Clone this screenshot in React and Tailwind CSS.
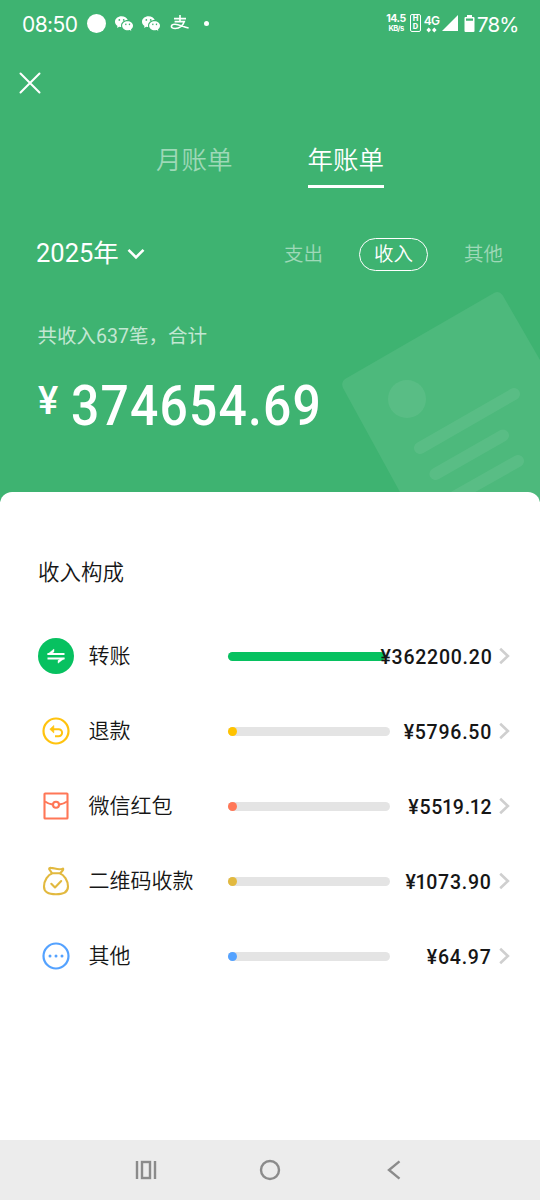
import React from "react";
import { BsWechat } from "react-icons/bs";

const CJK = "font-['Noto_Sans_CJK_SC',sans-serif] font-[350]";
const MIX = "font-['Roboto','Noto_Sans_CJK_SC',sans-serif]";

function AlipayGlyph() {
  return (
    <svg width="20" height="18" viewBox="0 0 20 18" fill="none" stroke="white" strokeWidth="1.6" className="ml-[10px]">
      <path d="M4 4.600h12M10 1v6.600M4.600 7.600h9.700C12.800 12 9 14.500 5.200 14.500C2.700 14.500 1.400 13.500 1.400 12.400C1.400 11.200 2.800 10.300 5 10.300C9 10.300 12.500 12.600 18.600 14" />
    </svg>
  );
}

function StatusBar() {
  return (
    <div className="flex h-[46px] items-center text-white font-['Inter',sans-serif]">
      <span className="ml-[22px] w-[56px] whitespace-nowrap text-[21px] leading-[26px] tracking-[-0.6px] mt-[3px]">08:50</span>
      <span className="ml-[9px] size-[19px] rounded-full bg-white" />
      <BsWechat className="ml-[9px] size-[18px]" />
      <BsWechat className="ml-[9px] size-[18px]" />
      <AlipayGlyph />
      <span className="ml-[14px] size-[5px] rounded-full bg-white" />
      <div className="ml-auto flex items-center">
        <div className="flex w-[20px] flex-col items-center font-bold whitespace-nowrap">
          <span className="text-[10.500px] leading-[11px] tracking-[-0.5px]">14.5</span>
          <span className="text-[7.500px] leading-[9px] tracking-[-0.6px]">KB/s</span>
        </div>
        <div className="ml-[4px] flex h-[18px] w-[11px] flex-col items-center justify-center rounded-[2px] border-[1.5px] border-white text-[7.500px] leading-[8px] font-extrabold">
          <span>H</span>
          <span>D</span>
        </div>
        <div className="ml-[3px] flex w-[15px] flex-col items-center pt-[1px]">
          <span className="text-[12px] font-semibold leading-[12px] tracking-[-0.7px]">4G</span>
          <svg width="11" height="6" viewBox="0 0 11 6" fill="white">
            <path d="M2.700.4L5 2.900L2.700 5.400L.4 2.900ZM8.300.4l2.300 2.500l-2.300 2.500L6 2.900Z" />
          </svg>
        </div>
        <svg width="16" height="16" viewBox="0 0 16 16" fill="white" className="ml-[3px]">
          <path d="M16 0v16H0Z" />
        </svg>
        <svg width="11" height="18" viewBox="0 0 11 18" className="ml-[6px] mt-[1px]">
          <path fill="white" fillRule="evenodd" d="M3 0h5v2h1.500a1 1 0 0 1 1 1v13a1 1 0 0 1-1 1h-8a1 1 0 0 1-1-1V3a1 1 0 0 1 1-1H3ZM2 3.600v2.200h7V3.600Z" />
        </svg>
        <span className="ml-[2px] mr-[22px] w-[41px] whitespace-nowrap text-[20.500px] leading-[26px] tracking-[-0.9px] mt-[3px]">78%</span>
      </div>
    </div>
  );
}

function ReceiptArt() {
  return (
    <svg className="absolute right-0 bottom-0" width="220" height="222" viewBox="320 280 220 222">
      <path
        fill="white"
        fillOpacity=".08"
        d="M345 379L494 293Q499 290 502.500 295L600 464L470 620L343 388Q340.500 382 345 379Z"
      />
      <g stroke="white" strokeOpacity=".07" strokeWidth="12" strokeLinecap="round">
        <circle cx="407" cy="399" r="19" fill="white" fillOpacity=".07" stroke="none" />
        <path d="M420 448L514 394" />
        <path d="M435.500 474L503 435.500" />
        <path d="M440 505L518 461" />
      </g>
    </svg>
  );
}

function TransferIcon() {
  return (
    <svg width="36" height="36" viewBox="0 0 36 36">
      <circle cx="18" cy="18" r="18" fill="#07c160" />
      <path d="M9.500 16H26.500M9.500 20.500H26.500" stroke="white" strokeWidth="1.900" fill="none" />
      <path d="M9.500 16.200L16 11V13.800L13.300 16ZM26.500 20.300L20 25.200V22.500L22.700 20.500Z" fill="white" stroke="white" strokeWidth=".4" />
    </svg>
  );
}

function RefundIcon() {
  return (
    <svg width="36" height="36" viewBox="0 0 36 36" fill="none" stroke="#ffc30f" strokeWidth="2.200">
      <circle cx="18" cy="18" r="12.500" />
      <path d="M14 16.200h6.600a3.500 3.500 0 0 1 0 7H17" strokeWidth="2" />
      <path d="M11.800 16.200l4-3.700v7.400Z" fill="#ffc30f" strokeWidth=".6" />
    </svg>
  );
}

function RedPacketIcon() {
  return (
    <svg width="36" height="36" viewBox="0 0 36 36" fill="none" stroke="#ff7757" strokeWidth="2.100">
      <rect x="6.500" y="5.500" width="23" height="25" rx=".6" />
      <path d="M7 13.500Q10.500 16 15 16.600M21 16.600Q25.500 16 29 13.500" />
      <circle cx="18" cy="16.700" r="3" />
    </svg>
  );
}

function MoneyBagIcon() {
  return (
    <svg width="36" height="36" viewBox="0 0 36 36" fill="none" stroke="#e2b93f" strokeWidth="2.100" strokeLinecap="round" strokeLinejoin="round">
      <path d="M13.600 9.700L11.200 6.200Q11 4.700 13 4.900C17 5.200 20.500 7.400 24.800 5.600Q25.500 5.600 25 7L22.500 10" />
      <path d="M14.500 10.200H21.500C26 11.500 30 17.500 30 23.500C30 29 26 31.300 18 31.300S6 29 6 23.500C6 17.500 10 11.500 14.500 10.200Z" />
      <path d="M13.300 20.800L17 24.500L23.200 18" />
    </svg>
  );
}

function MoreIcon() {
  return (
    <svg width="36" height="36" viewBox="0 0 36 36" fill="#54a2ff">
      <circle cx="18" cy="18" r="12.500" fill="none" stroke="#54a2ff" strokeWidth="2.200" />
      <circle cx="12" cy="18" r="1.500" />
      <circle cx="18" cy="18" r="1.500" />
      <circle cx="24" cy="18" r="1.500" />
    </svg>
  );
}

const ROWS = [
  { name: "转账", amount: "¥362200.20", Icon: TransferIcon, color: "#07c160", width: 157 },
  { name: "退款", amount: "¥5796.50", Icon: RefundIcon, color: "#ffc300", width: 9 },
  { name: "微信红包", amount: "¥5519.12", Icon: RedPacketIcon, color: "#ff7757", width: 9 },
  { name: "二维码收款", amount: "¥1073.90", Icon: MoneyBagIcon, color: "#e2b93f", width: 9 },
  { name: "其他", amount: "¥64.97", Icon: MoreIcon, color: "#54a2ff", width: 9 },
];

/* The digit 1 is set tighter than the other figures. */
function Amount({ value }) {
  return (
    <span className="origin-right scale-x-[.93] whitespace-nowrap">
      {value.split(/(1)/).map((part, i) =>
        part === "1" ? <span key={i} className="-mx-[1.200px]">1</span> : part
      )}
    </span>
  );
}

function Row({ name, amount, Icon, color, width }) {
  return (
    <div className="flex h-[75px] items-center pl-[37.500px]">
      <div className="-mt-[2px]">
        <Icon />
      </div>
      <span className={`ml-[15px] w-[139.500px] whitespace-nowrap text-[21px] leading-[30px] text-[#161616] -mt-[5px] ${CJK}`}>{name}</span>
      <div className="-mt-px h-[9px] w-[162px] shrink-0 rounded-full bg-[#e4e4e4]">
        <div className="h-full rounded-full" style={{ width, backgroundColor: color }} />
      </div>
      <div className="relative flex w-[102px] shrink-0 justify-end font-['Roboto',sans-serif] text-[21px] leading-[30px] font-medium tracking-[0.800px] text-[#161616]">
        <Amount value={amount} />
      </div>
      <svg width="12" height="18" viewBox="0 0 12 18" fill="none" stroke="#cfcfcf" strokeWidth="2.600" className="ml-[7px] -mt-[2px]">
        <path d="M1.200 1.700L8.900 9L1.200 16.300" />
      </svg>
    </div>
  );
}

export default function App() {
  return (
    <div className="flex h-[1200px] w-[540px] flex-col overflow-hidden bg-white">
      <header className="relative h-[502px] shrink-0 bg-[#3eb371] text-white">
        <ReceiptArt />
        <StatusBar />
        <div className="flex h-[74px] items-center pl-[19px]">
          <svg width="22" height="22" viewBox="0 0 22 22" fill="none" stroke="white" strokeWidth="2" strokeLinecap="round">
            <path d="M1.500 1.500L20.500 20.500M20.500 1.500L1.500 20.500" />
          </svg>
        </div>
        <nav className={`flex gap-[75px] pt-[19px] pl-[156px] text-[25.500px] leading-[38px] ${CJK}`}>
          <span className="text-white/50">月账单</span>
          <span className="h-[49px] border-b-[3px] border-white">年账单</span>
        </nav>
        <div className={`mt-[49px] flex h-[34px] items-center pl-[36px] ${MIX}`}>
          <span className="-mt-[2px] text-[25.500px] leading-[34px]">2025年</span>
          <svg width="18" height="12" viewBox="0 0 18 12" fill="none" stroke="white" strokeWidth="2.600" className="ml-[8px]">
            <path d="M1.500 1.800L9 9.300L16.500 1.800" />
          </svg>
          <div className={`mr-[37px] ml-auto flex items-center text-[19.500px] leading-[30px] ${CJK}`}>
            <span className="-mt-[2px] text-white/50">支出</span>
            <span className="mx-[36px] flex h-[33px] w-[69px] items-center justify-center rounded-full border-[1.500px] border-white pb-[2px]">收入</span>
            <span className="-mt-[2px] text-white/50">其他</span>
          </div>
        </div>
        <p className={`mt-[51px] pl-[37.500px] text-[19.500px] leading-[30px] text-white/70 ${MIX}`}>共收入637笔，合计</p>
        <div className="mt-[19px] flex items-start pl-[38px] font-['Roboto',sans-serif] font-medium">
          <span className="w-[33px] text-[38px] leading-[60px]">¥</span>
          <span className="origin-left scale-x-[.89] text-[56px] leading-[70px] tracking-[1.300px]">374654.69</span>
        </div>
      </header>
      <main className="relative -mt-[10px] h-[648px] shrink-0 rounded-t-[12px] bg-white pt-[62px]">
        <h2 className={`pl-[38px] text-[21.500px] leading-[34px] text-[#161616] ${CJK}`}>收入构成</h2>
        <div className="mt-[31px]">
          {ROWS.map((row) => (
            <Row key={row.name} {...row} />
          ))}
        </div>
      </main>
      <footer className="h-[60px] shrink-0 bg-[#ececec] pr-[137px] pl-[135px]">
        <div className="flex h-[60px] items-center justify-between">
          <svg width="22" height="20" viewBox="0 0 22 20" fill="none" stroke="#8b8b8b" strokeWidth="2.400">
            <path d="M2 1v18M20 1v18" />
            <rect x="7" y="2" width="8" height="16" />
          </svg>
          <svg width="22" height="22" viewBox="0 0 22 22" fill="none" stroke="#8b8b8b" strokeWidth="2.400" className="-ml-[2px]">
            <circle cx="11" cy="11" r="9" />
          </svg>
          <svg width="18" height="20" viewBox="0 0 18 20" fill="none" stroke="#8b8b8b" strokeWidth="2.400">
            <path d="M14.500 1.300L4 10L14.500 18.700" />
          </svg>
        </div>
      </footer>
    </div>
  );
}
